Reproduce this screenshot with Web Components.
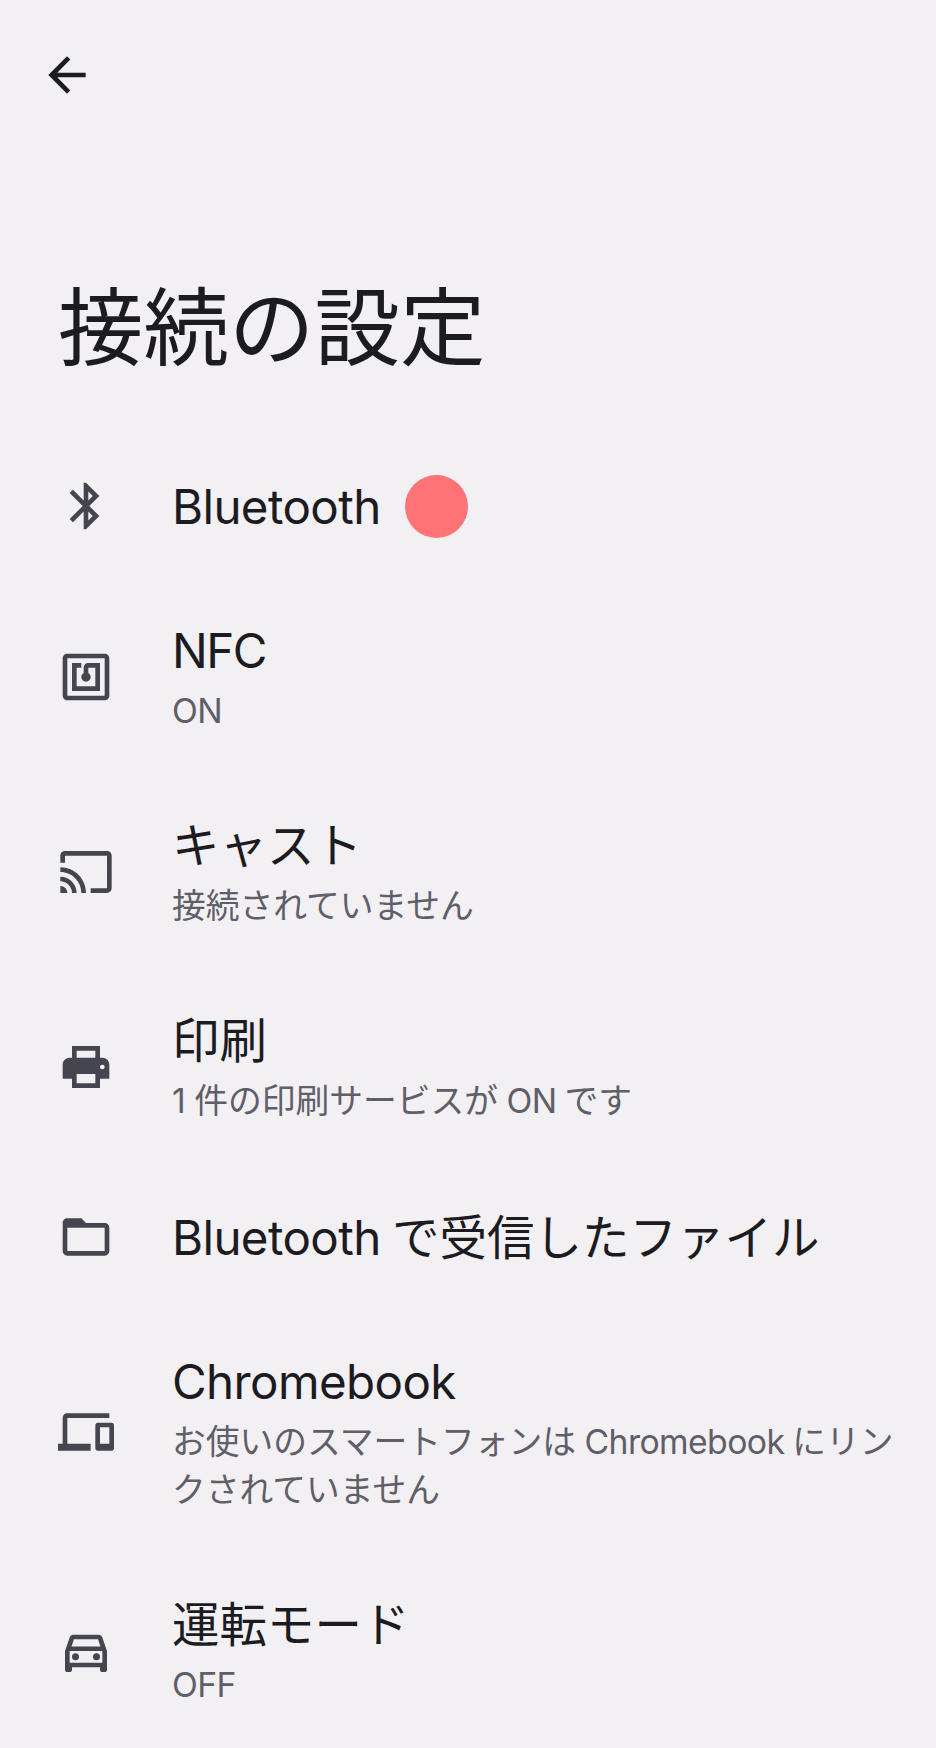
<!DOCTYPE html>
<html lang="ja">
<head>
<meta charset="utf-8">
<title>接続の設定</title>
<style>
    html, body {
        margin: 0;
        padding: 0;
        background: #f2f0f3;
    }
    body {
        font-family: "Inter", "Noto Sans CJK JP", sans-serif;
    }
</style>
</head>
<body>
<settings-page>
    <page-header slot="header">接続の設定</page-header>

    <settings-item>
        <pref-icon slot="icon" name="bluetooth"></pref-icon>
        <latin-text>Bluetooth</latin-text>
        <touch-dot slot="overlay"></touch-dot>
    </settings-item>

    <settings-item>
        <pref-icon slot="icon" name="nfc"></pref-icon>
        <latin-text style="--latin-spacing: -1.5px">NFC</latin-text>
        <span slot="summary"><latin-text>ON</latin-text></span>
    </settings-item>

    <settings-item>
        <pref-icon slot="icon" name="cast"></pref-icon>
        キャスト
        <span slot="summary">接続されていません</span>
    </settings-item>

    <settings-item>
        <pref-icon slot="icon" name="print"></pref-icon>
        印刷
        <span slot="summary">1 件の印刷サービスが <latin-text>ON</latin-text> です</span>
    </settings-item>

    <settings-item>
        <pref-icon slot="icon" name="folder"></pref-icon>
        <latin-text>Bluetooth</latin-text> で受信したファイル
    </settings-item>

    <settings-item>
        <pref-icon slot="icon" name="devices"></pref-icon>
        <latin-text>Chromebook</latin-text>
        <span slot="summary">お使いのスマートフォンは <latin-text>Chromebook</latin-text> にリン<br>クされていません</span>
    </settings-item>

    <settings-item>
        <pref-icon slot="icon" name="car"></pref-icon>
        運転モード
        <span slot="summary"><latin-text>OFF</latin-text></span>
    </settings-item>
</settings-page>

<script>
const ICONS = {
    back: 'M20 11H7.83l5.59-5.59L12 4l-8 8 8 8 1.41-1.41L7.83 13H20v-2z',
    bluetooth: 'M17.71 7.71L12 2h-1v7.59L6.41 5 5 6.41 10.59 12 5 17.59 6.41 19 11 14.41V22h1l5.71-5.71-4.3-4.29 4.3-4.29zM13 5.83l1.88 1.88L13 9.59V5.83zm1.88 10.46L13 18.17v-3.76l1.88 1.88z',
    nfc: 'M20 2H4c-1.1 0-2 .9-2 2v16c0 1.1.9 2 2 2h16c1.1 0 2-.9 2-2V4c0-1.1-.9-2-2-2zm0 18H4V4h16v16zM18 6h-5c-1.1 0-2 .9-2 2v2.28c-.6.35-1 .98-1 1.72 0 1.1.9 2 2 2s2-.9 2-2c0-.74-.4-1.38-1-1.72V8h3v8H8V8h2V6H6v12h12V6z',
    cast: 'M21 3H3c-1.1 0-2 .9-2 2v3h2V5h18v14h-7v2h7c1.1 0 2-.9 2-2V5c0-1.1-.9-2-2-2zM1 18v3h3c0-1.66-1.34-3-3-3zm0-4v2c2.76 0 5 2.24 5 5h2c0-3.87-3.13-7-7-7zm0-4v2c4.97 0 9 4.03 9 9h2c0-6.08-4.93-11-11-11z',
    print: 'M19 8h-1V3H6v5H5c-1.66 0-3 1.34-3 3v6h4v4h12v-4h4v-6c0-1.66-1.34-3-3-3zM8 5h8v3H8V5zm0 10h8v4H8v-4zm11-2a1 1 0 0 1 0-2 1 1 0 0 1 0 2z',
    folder: 'M20 6h-8l-2-2H4c-1.1 0-1.99.9-1.99 2L2 18c0 1.1.9 2 2 2h16c1.1 0 2-.9 2-2V8c0-1.1-.9-2-2-2zm0 12H4V8h16v10z',
    devices: 'M4 6h18V4H4c-1.1 0-2 .9-2 2v11H0v3h14v-3H4V6zm19 2h-6c-.55 0-1 .45-1 1v10c0 .55.45 1 1 1h6c.55 0 1-.45 1-1V9c0-.55-.45-1-1-1zm-1 9h-4v-7h4v7z',
    car: 'M18.92 6.01C18.72 5.42 18.16 5 17.5 5h-11c-.66 0-1.21.42-1.42 1.01L3 12v8c0 .55.45 1 1 1h1c.55 0 1-.45 1-1v-1h12v1c0 .55.45 1 1 1h1c.55 0 1-.45 1-1v-8l-2.08-5.99zM6.85 7h10.29l1.08 3.11H5.77L6.85 7zM19 17H5v-5h14v5zM7.5 16a1.5 1.5 0 1 0 0-3 1.5 1.5 0 0 0 0 3zm9 0a1.5 1.5 0 1 0 0-3 1.5 1.5 0 0 0 0 3z'
};

class PrefIcon extends HTMLElement {
    connectedCallback() {
        this.attachShadow({ mode: 'open' });
        this.shadowRoot.innerHTML = `
            <style>
                :host {
                    display: block;
                    width: 56px;
                    height: 56px;
                    color: #45454f;
                }
                svg {
                    display: block;
                    width: 100%;
                    height: 100%;
                    fill: currentColor;
                }
            </style>
            <svg viewBox="0 0 24 24"><path d="${ICONS[this.getAttribute('name')]}"/></svg>
        `;
    }
}

// Latin runs are tightened a little, the CJK around them keeps full width
class LatinText extends HTMLElement {
    connectedCallback() {
        this.attachShadow({ mode: 'open' });
        this.shadowRoot.innerHTML = `
            <style>
                :host {
                    display: inline;
                    letter-spacing: var(--latin-spacing, 0);
                }
            </style>
            <slot></slot>
        `;
    }
}

class PageHeader extends HTMLElement {
    connectedCallback() {
        this.attachShadow({ mode: 'open' });
        this.shadowRoot.innerHTML = `
            <style>
                :host {
                    display: block;
                    height: 433px;
                    box-sizing: border-box;
                    padding-top: 47px;
                }
                pref-icon {
                    margin-left: 39px;
                    color: #1c1b1f;
                }
                h1 {
                    margin: 171px 0 0 58px;
                    font: 400 85.5px/108px "Inter", "Noto Sans CJK JP", sans-serif;
                    color: #1c1b1f;
                }
            </style>
            <pref-icon name="back"></pref-icon>
            <h1><slot></slot></h1>
        `;
    }
}

class SettingsItem extends HTMLElement {
    connectedCallback() {
        this.attachShadow({ mode: 'open' });
        this.shadowRoot.innerHTML = `
            <style>
                :host {
                    display: flex;
                    position: relative;
                    box-sizing: border-box;
                    min-height: 146px;
                    align-items: center;
                    padding: 41px 36px 39px 58px;
                }
                .icon {
                    flex: none;
                    width: 56px;
                    height: 56px;
                    margin-right: 58px;
                    margin-bottom: 2px;
                }
                .text {
                    flex: 1;
                    min-width: 0;
                }
                .title {
                    --latin-spacing: -0.6px;
                    font-size: 47.5px;
                    line-height: 62px;
                    word-spacing: -1.5px;
                    color: #1c1b1f;
                }
                .summary {
                    --latin-spacing: -0.6px;
                    font-size: 33.75px;
                    line-height: 48px;
                    word-spacing: -1px;
                    color: #5f5e69;
                    margin-top: 5px;
                }
            </style>
            <div class="icon"><slot name="icon"></slot></div>
            <div class="text">
                <div class="title"><slot></slot></div>
                <div class="summary" id="summary"><slot name="summary"></slot></div>
            </div>
            <slot name="overlay"></slot>
        `;
        // no summary text, no second line
        if (!this.querySelector('[slot="summary"]')) {
            this.shadowRoot.getElementById('summary').style.display = 'none';
        }
    }
}

class TouchDot extends HTMLElement {
    connectedCallback() {
        this.attachShadow({ mode: 'open' });
        this.shadowRoot.innerHTML = `
            <style>
                :host {
                    position: absolute;
                    left: 405px;
                    top: 42px;
                    width: 63px;
                    height: 63px;
                    border-radius: 50%;
                    background: #ff7276;
                }
            </style>
        `;
    }
}

class SettingsPage extends HTMLElement {
    connectedCallback() {
        this.attachShadow({ mode: 'open' });
        this.shadowRoot.innerHTML = `
            <style>
                :host {
                    display: block;
                    width: 936px;
                    height: 1748px;
                    overflow: hidden;
                    background: #f2f0f3;
                }
            </style>
            <slot name="header"></slot>
            <slot></slot>
        `;
    }
}

customElements.define('pref-icon', PrefIcon);
customElements.define('latin-text', LatinText);
customElements.define('page-header', PageHeader);
customElements.define('settings-item', SettingsItem);
customElements.define('touch-dot', TouchDot);
customElements.define('settings-page', SettingsPage);
</script>
</body>
</html>
